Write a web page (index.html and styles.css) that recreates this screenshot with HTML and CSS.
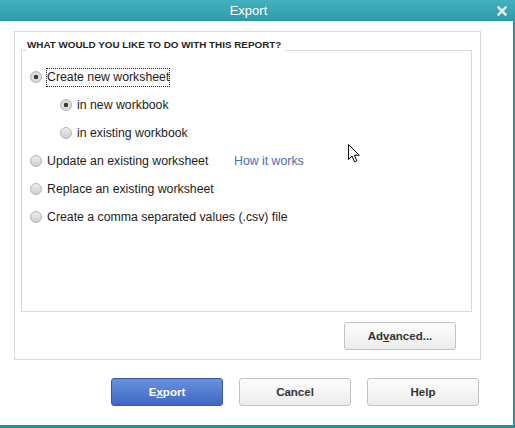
FILE: index.html
```html
<!DOCTYPE html>
<html>
<head>
<meta charset="utf-8">
<link rel="stylesheet" href="styles.css">
</head>
<body>
<div class="window">
  <div class="titlebar">
    <div class="title">Export</div>
    <svg class="close" width="10" height="10" viewBox="0 0 10 10"><path d="M1.5 1.5 L8.5 8.5 M8.5 1.5 L1.5 8.5" stroke="#dfe8ea" stroke-width="2.6" stroke-linecap="square"/></svg>
  </div>
  <div class="content">
    <div class="outer">
      <div class="group">
        <div class="group-head"><span class="legend">WHAT WOULD YOU LIKE TO DO WITH THIS REPORT?</span></div>
        <div class="group-body">
          <label class="row"><input type="radio" name="a" checked><span class="focus">Create new worksheet</span></label>
          <label class="row sub"><input type="radio" name="b" checked><span>in new workbook</span></label>
          <label class="row sub"><input type="radio" name="b"><span>in existing workbook</span></label>
          <div class="row"><label class="wide"><input type="radio" name="a"><span>Update an existing worksheet</span></label><a class="link">How it works</a></div>
          <label class="row"><input type="radio" name="a"><span>Replace an existing worksheet</span></label>
          <label class="row"><input type="radio" name="a"><span>Create a comma separated values (.csv) file</span></label>
        </div>
      </div>
      <div class="adv-row"><button class="btn">Ad<u>v</u>anced...</button></div>
    </div>
    <div class="footer">
      <button class="btn primary">E<u>x</u>port</button>
      <button class="btn">Cancel</button>
      <button class="btn">Help</button>
    </div>
  </div>
  <svg class="cursor" width="13" height="19" viewBox="0 0 13 19"><path d="M0.5 0.5 L0.5 15.5 L4 12 L6.5 17.8 L8.8 16.8 L6.4 11.2 L11.3 11.2 Z" fill="#fff" stroke="#000" stroke-width="1" stroke-linejoin="miter"/></svg>
</div>
</body>
</html>
```

FILE: styles.css
```css
* { box-sizing: border-box; }
html, body { margin: 0; padding: 0; }
body {
  width: 515px;
  height: 428px;
  background: #fff;
  font-family: "Liberation Sans", Arial, sans-serif;
  overflow: hidden;
}
.window {
  position: relative;
  width: 515px;
  height: 428px;
  display: flex;
  flex-direction: column;
  border-bottom: 3px solid #2a9099;
  background: #fff;
}
.titlebar {
  height: 21px;
  flex: none;
  display: flex;
  align-items: center;
  padding-right: 8px;
  background: linear-gradient(#44b1be, #2d9aa7);
}
.title {
  flex: 1;
  text-align: center;
  color: #fff;
  font-size: 13px;
  line-height: 20px;
}
.close { flex: none; display: block; }
.content {
  flex: 1;
  padding: 10px 0 0 14px;
  border-right: 2px solid #2a9099;
}
.outer {
  width: 467px;
  border: 1px solid #d9d9d9;
  padding: 7px 8px 9px 6px;
}
.group-head {
  display: flex;
  align-items: flex-end;
  height: 12px;
}
.group-head::before {
  content: "";
  width: 5px;
  border-bottom: 1px solid #d9d9d9;
}
.group-head::after {
  content: "";
  flex: 1;
  border-bottom: 1px solid #d9d9d9;
}
.legend {
  font-size: 9.85px;
  font-weight: bold;
  color: #262626;
  line-height: 12px;
  padding: 0 4px 0 1px;
}
.group-body {
  border: 1px solid #d9d9d9;
  border-top: none;
  padding: 12px 0 80px 8px;
}
.row {
  display: flex;
  align-items: center;
  height: 28px;
  font-size: 12.3px;
  color: #1c1c1c;
}
.row.sub { padding-left: 30px; }
.wide {
  display: flex;
  align-items: center;
  width: 204px;
}
.row input {
  appearance: none;
  -webkit-appearance: none;
  margin: 0 5px 0 0;
  width: 12px;
  height: 12px;
  border-radius: 50%;
  border: 1px solid #b4b4b4;
  background: linear-gradient(#ececec, #cfcfcf);
  flex: none;
  position: relative;
}
.row input:checked {
  background: radial-gradient(circle, #3a3a3a 0 2px, #e2e2e2 2.6px, #cdcdcd 100%);
}
.focus {
  outline: 1px dotted #222;
  line-height: 17px;
}
.link {
  color: #4a6db3;
  font-size: 12.3px;
}
.adv-row {
  display: flex;
  justify-content: flex-end;
  padding-right: 16px;
  margin-top: 10px;
}
.btn {
  width: 112px;
  height: 28px;
  border: 1px solid #c2c2c2;
  border-radius: 3px;
  background: linear-gradient(#fdfdfd, #ececec);
  font-family: "Liberation Sans", Arial, sans-serif;
  font-size: 11.5px;
  font-weight: bold;
  color: #333;
  padding: 0;
}
.btn.primary {
  background: linear-gradient(#6892dc, #3f67c3);
  border-color: #3358aa;
  color: #fff;
}
.footer {
  display: flex;
  justify-content: flex-end;
  gap: 16px;
  padding-right: 34px;
  margin-top: 18px;
}
.cursor {
  position: absolute;
  left: 348px;
  top: 144px;
}
```
